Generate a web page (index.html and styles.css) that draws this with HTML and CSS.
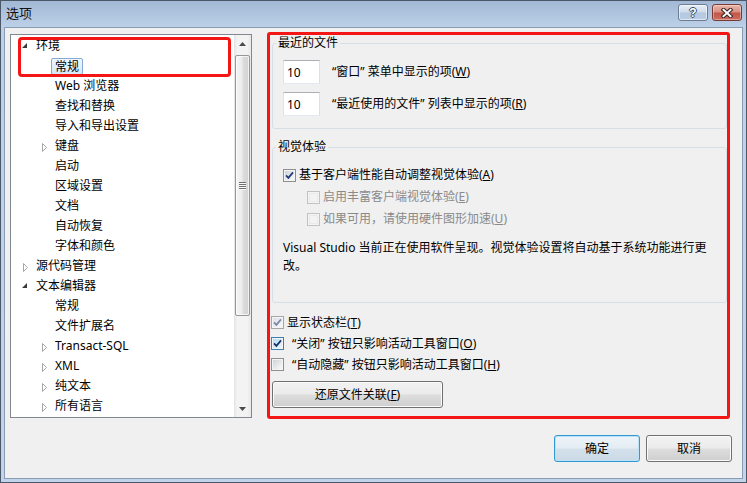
FILE: index.html
```html
<!DOCTYPE html>
<html lang="zh-CN">
<head>
<meta charset="utf-8">
<title>选项</title>
<link rel="stylesheet" href="styles.css">
</head>
<body>
<div class="window">
  <div class="titlebar">
    <span class="title">选项</span>
    <div class="caption-btns">
      <span class="cap help">?</span>
      <span class="cap close"><svg width="12" height="10" viewBox="0 0 12 10"><path d="M2.5 1.8 L9.5 8.2 M9.5 1.8 L2.5 8.2" stroke="#3b2724" stroke-width="4" stroke-linecap="square" fill="none"/><path d="M2.5 1.8 L9.5 8.2 M9.5 1.8 L2.5 8.2" stroke="#fff" stroke-width="2" stroke-linecap="square" fill="none"/></svg></span>
    </div>
  </div>
  <div class="client">
    <div class="main">
      <div class="tree">
        <div class="tree-list">
          <div class="row l0"><svg class="tw" viewBox="0 0 10 12"><polygon points="5,3 5,8 0,8" fill="#3a3a3a"/></svg><span class="lbl">环境</span></div>
          <div class="row l1"><span class="tw"></span><span class="lbl sel">常规</span></div>
          <div class="row l1"><span class="tw"></span><span class="lbl">Web 浏览器</span></div>
          <div class="row l1"><span class="tw"></span><span class="lbl">查找和替换</span></div>
          <div class="row l1"><span class="tw"></span><span class="lbl">导入和导出设置</span></div>
          <div class="row l1"><svg class="tw" viewBox="0 0 10 12"><polygon points="1.5,3.5 5.5,7.5 1.5,11.5" fill="#fff" stroke="#a6a6a6"/></svg><span class="lbl">键盘</span></div>
          <div class="row l1"><span class="tw"></span><span class="lbl">启动</span></div>
          <div class="row l1"><span class="tw"></span><span class="lbl">区域设置</span></div>
          <div class="row l1"><span class="tw"></span><span class="lbl">文档</span></div>
          <div class="row l1"><span class="tw"></span><span class="lbl">自动恢复</span></div>
          <div class="row l1"><span class="tw"></span><span class="lbl">字体和颜色</span></div>
          <div class="row l0"><svg class="tw" viewBox="0 0 10 12"><polygon points="1.5,3.5 5.5,7.5 1.5,11.5" fill="#fff" stroke="#a6a6a6"/></svg><span class="lbl">源代码管理</span></div>
          <div class="row l0"><svg class="tw" viewBox="0 0 10 12"><polygon points="5,3 5,8 0,8" fill="#3a3a3a"/></svg><span class="lbl">文本编辑器</span></div>
          <div class="row l1"><span class="tw"></span><span class="lbl">常规</span></div>
          <div class="row l1"><span class="tw"></span><span class="lbl">文件扩展名</span></div>
          <div class="row l1"><svg class="tw" viewBox="0 0 10 12"><polygon points="1.5,3.5 5.5,7.5 1.5,11.5" fill="#fff" stroke="#a6a6a6"/></svg><span class="lbl">Transact-SQL</span></div>
          <div class="row l1"><svg class="tw" viewBox="0 0 10 12"><polygon points="1.5,3.5 5.5,7.5 1.5,11.5" fill="#fff" stroke="#a6a6a6"/></svg><span class="lbl">XML</span></div>
          <div class="row l1"><svg class="tw" viewBox="0 0 10 12"><polygon points="1.5,3.5 5.5,7.5 1.5,11.5" fill="#fff" stroke="#a6a6a6"/></svg><span class="lbl">纯文本</span></div>
          <div class="row l1"><svg class="tw" viewBox="0 0 10 12"><polygon points="1.5,3.5 5.5,7.5 1.5,11.5" fill="#fff" stroke="#a6a6a6"/></svg><span class="lbl">所有语言</span></div>
          <div class="mark"></div>
        </div>
        <div class="vscroll">
          <div class="sb-btn"><svg width="7" height="4" viewBox="0 0 7 4"><polygon points="3.5,0 7,4 0,4" fill="#4a4a4a"/></svg></div>
          <div class="sb-track">
            <div class="thumb"><svg width="7" height="8" viewBox="0 0 7 8"><path d="M0 0.5 H7 M0 2.5 H7 M0 4.5 H7 M0 6.5 H7" stroke="#6f6f6f" stroke-width="1"/><path d="M0 1.5 H7 M0 3.5 H7 M0 5.5 H7 M0 7.5 H7" stroke="#fafafa" stroke-width="1"/></svg></div>
          </div>
          <div class="sb-btn"><svg width="7" height="4" viewBox="0 0 7 4"><polygon points="0,0 7,0 3.5,4" fill="#4a4a4a"/></svg></div>
        </div>
      </div>

      <div class="options">
        <fieldset class="group g1">
          <legend>最近的文件</legend>
          <div class="content">
            <div class="numrow"><input class="num" type="text" value="10"><span class="nlabel">“窗口” 菜单中显示的项(<u>W</u>)</span></div>
            <div class="numrow second"><input class="num" type="text" value="10"><span class="nlabel">“最近使用的文件” 列表中显示的项(<u>R</u>)</span></div>
          </div>
        </fieldset>

        <fieldset class="group g2">
          <legend>视觉体验</legend>
          <div class="content">
            <div class="chk"><span class="cb"><i></i><svg viewBox="0 0 11 11"><path d="M2 5.3 L4.4 7.9 L9 2.4" stroke="#22397a" stroke-width="1.7" fill="none"/></svg></span><span>基于客户端性能自动调整视觉体验(<u>A</u>)</span></div>
            <div class="chk sub dis"><span class="cb"><i></i></span><span>启用丰富客户端视觉体验(<u>E</u>)</span></div>
            <div class="chk sub dis"><span class="cb"><i></i></span><span>如果可用，请使用硬件图形加速(<u>U</u>)</span></div>
            <p class="note">Visual Studio 当前正在使用软件呈现。视觉体验设置将自动基于系统功能进行更<br>改。</p>
          </div>
        </fieldset>

        <div class="checks">
          <div class="chk tight dim"><span class="cb"><i></i><svg viewBox="0 0 11 11"><path d="M2 5.3 L4.4 7.9 L9 2.4" stroke="#7a88aa" stroke-width="1.7" fill="none"/></svg></span><span>显示状态栏(<u>T</u>)</span></div>
          <div class="chk tight hot"><span class="cb"><i></i><svg viewBox="0 0 11 11"><path d="M2 5.3 L4.4 7.9 L9 2.4" stroke="#17306e" stroke-width="1.7" fill="none"/></svg></span><span class="ql">“关闭” 按钮只影响活动工具窗口(<u>O</u>)</span></div>
          <div class="chk tight"><span class="cb"><i></i></span><span class="ql">“自动隐藏” 按钮只影响活动工具窗口(<u>H</u>)</span></div>
        </div>
        <button class="btn wide" type="button">还原文件关联(<u>F</u>)</button>
      </div>
    </div>

    <div class="footer">
      <button class="btn default" type="button">确定</button>
      <button class="btn" type="button">取消</button>
    </div>
  </div>
</div>
</body>
</html>
```

FILE: styles.css
```css
html, body {
  margin: 0;
  padding: 0;
  background: #f0f0f0;
}

body {
  font-family: "Noto Sans", "Noto Sans CJK SC", sans-serif;
  font-size: 12px;
  color: #000;
}

.window {
  width: 747px;
  height: 483px;
  box-sizing: border-box;
  border: 1px solid #4a5868;
  background: linear-gradient(#a2b8d4 0px, #bcd0e8 26px, #c2d4eb 100%);
  padding: 0 3px 3px;
  display: flex;
  flex-direction: column;
}

/* ---------- title bar ---------- */
.titlebar {
  height: 26px;
  flex: none;
  display: flex;
  justify-content: space-between;
  align-items: flex-start;
  padding: 0 1px 0 2px;
}

.title {
  font-family: "Noto Sans CJK SC", sans-serif;
  font-size: 13px;
  line-height: 16px;
  margin-top: 4px;
  color: #111;
}

.caption-btns {
  display: flex;
  gap: 4px;
  margin-top: 3px;
}

.cap {
  width: 30px;
  height: 17px;
  box-sizing: border-box;
  border-radius: 3px;
  display: flex;
  align-items: center;
  justify-content: center;
}

.help {
  border: 1px solid #6a7d95;
  background: linear-gradient(#e6eef7 0%, #cfdbea 48%, #b5c8df 52%, #b8cce4 100%);
  box-shadow: inset 0 0 0 1px rgba(255, 255, 255, 0.55);
  color: #fff;
  font-family: "Liberation Sans", sans-serif;
  font-weight: bold;
  font-size: 12px;
  line-height: 14px;
  text-shadow: 1px 0 #3c4a5e, -1px 0 #3c4a5e, 0 1px #3c4a5e, 0 -1px #3c4a5e;
}

.close {
  border: 1px solid #7a3a33;
  background: linear-gradient(#e9b5aa 0%, #d98d80 48%, #c45447 52%, #cb6e5f 100%);
  box-shadow: inset 0 0 0 1px rgba(255, 255, 255, 0.35);
}

/* ---------- client area ---------- */
.client {
  flex: 1;
  border: 1px solid #8a9cb4;
  background: #f0f0f0;
  display: flex;
  flex-direction: column;
}

.main {
  display: flex;
  align-items: flex-start;
  padding: 4px 0 0 5px;
}

/* ---------- tree ---------- */
.tree {
  margin-top: 2px;
  width: 242px;
  height: 384px;
  box-sizing: border-box;
  border: 1px solid #828790;
  background: #fff;
  display: flex;
  flex: none;
}

.tree-list {
  flex: 1;
  position: relative;
  padding-top: 1px;
}

.row {
  height: 20px;
  display: flex;
  align-items: center;
  white-space: nowrap;
  line-height: 16px;
}

.l0 { padding-left: 11px; }
.l1 { padding-left: 30px; }

.tw {
  width: 10px;
  height: 12px;
  margin-right: 4px;
  flex: none;
  display: block;
}

.lbl.sel {
  margin-left: -4px;
  padding: 0 3px;
  line-height: 15px;
  border: 1px solid #86a9d3;
  border-radius: 2px;
  background: linear-gradient(#f1f7fe, #d6e7fa);
}

.mark {
  position: absolute;
  left: 7px;
  top: 2px;
  width: 213px;
  height: 40px;
  box-sizing: border-box;
  border: 3px solid #f41515;
  border-radius: 4px;
}

/* scrollbar */
.vscroll {
  width: 17px;
  flex: none;
  display: flex;
  flex-direction: column;
  background: linear-gradient(to right, #e3e3e3 0px, #f3f3f3 3px, #f3f3f3 13px, #e8e8e8 17px);
}

.sb-btn {
  height: 17px;
  flex: none;
  display: flex;
  align-items: center;
  justify-content: center;
}

.sb-track {
  flex: 1;
  padding: 3px 1px 0;
}

.thumb {
  height: 261px;
  box-sizing: border-box;
  border: 1px solid #979797;
  border-radius: 2px;
  background: linear-gradient(to right, #f5f5f5 0%, #ececec 45%, #dcdcdc 55%, #d2d2d2 100%);
  box-shadow: inset 0 0 0 1px rgba(255, 255, 255, 0.7);
  display: flex;
  align-items: center;
  justify-content: center;
}

/* ---------- options panel ---------- */
.options {
  margin-left: 15px;
  width: 463px;
  height: 387px;
  box-sizing: border-box;
  border: 3px solid #f41515;
  border-radius: 3px;
  padding: 0 0 0 2px;
  display: flex;
  flex-direction: column;
  align-items: stretch;
  flex: none;
}

.group {
  margin: 0;
  padding: 0 0 0 3px;
  border: 1px solid #d5dfe5;
  border-radius: 3px;
  min-width: 0;
}

.group legend {
  padding: 0 2px;
  line-height: 16px;
  font-size: 12px;
}

.g1 .content { padding: 9px 0 12px 7px; }

.g2 { margin-top: 10px; }
.g2 .content { padding: 9px 0 27px 7px; }

.numrow {
  display: flex;
  align-items: center;
  white-space: nowrap;
  line-height: 16px;
}

.numrow.second { margin-top: 8px; }

.num {
  width: 37px;
  height: 24px;
  box-sizing: border-box;
  margin: 0;
  padding: 0 3px;
  border: 1px solid;
  border-color: #abadb3 #dbdfe6 #e3e9ef #e2e3ea;
  background: #fff;
  font-family: "Noto Sans", sans-serif;
  font-size: 12px;
  color: #000;
  outline: none;
}

.nlabel { margin-left: 12px; }

.chk {
  height: 22px;
  display: flex;
  align-items: center;
  white-space: nowrap;
  line-height: 16px;
}

.chk.sub { margin-left: 24px; }
.chk.dis { color: #8a8a8a; }

.cb {
  width: 13px;
  height: 13px;
  box-sizing: border-box;
  border: 1px solid #8e8f8f;
  background: #f4f4f4;
  margin-right: 3px;
  flex: none;
  display: grid;
}

.cb > * {
  grid-area: 1 / 1;
}

.cb i {
  margin: 1px;
  background: linear-gradient(135deg, #cfd3d8 0%, #e9ebed 60%, #f8f8f8 100%);
}

.cb svg {
  width: 11px;
  height: 11px;
  display: block;
}

.chk.dis .cb {
  border-color: #c2c2c2;
}

.chk.dis .cb i {
  background: #f3f3f3;
  box-shadow: inset 0 0 0 1px #e9e9e9;
}

.chk.dim .cb {
  border-color: #a6a6a6;
}

.chk.dim .cb i {
  background: linear-gradient(135deg, #dcdfe3 0%, #eeeff1 60%, #f9f9f9 100%);
}

.chk.hot .cb {
  border-color: #3c7fb1;
}

.chk.hot .cb i {
  background: linear-gradient(135deg, #b4dcf4 0%, #d6ecf9 60%, #ecf7fd 100%);
}

.ql { margin-left: 5px; }

.note {
  margin: 9px 0 0;
  line-height: 18px;
  white-space: nowrap;
}

.checks {
  margin-top: 9px;
  margin-left: -1px;
}

.chk.tight { height: 21px; }

/* ---------- buttons ---------- */
.btn {
  height: 27px;
  box-sizing: border-box;
  margin: 0;
  padding: 0;
  border: 1px solid #707070;
  border-radius: 3px;
  background: linear-gradient(#f2f2f2 0%, #ebebeb 48%, #dddddd 52%, #cfcfcf 100%);
  box-shadow: inset 0 0 0 1px #fbfbfb;
  font-family: "Noto Sans", "Noto Sans CJK SC", sans-serif;
  font-size: 12px;
  line-height: 16px;
  color: #000;
}

.wide {
  width: 171px;
  margin-top: 6px;
}

.footer {
  display: flex;
  justify-content: flex-end;
  gap: 6px;
  margin-top: 16px;
  padding-right: 10px;
}

.footer .btn { width: 86px; }

.btn.default {
  border-color: #3399d2;
  background: linear-gradient(#eef4f9 0%, #e4edf4 48%, #d4e1eb 52%, #cad9e5 100%);
  box-shadow: inset 0 0 0 1px #b9e2f6;
}
```
